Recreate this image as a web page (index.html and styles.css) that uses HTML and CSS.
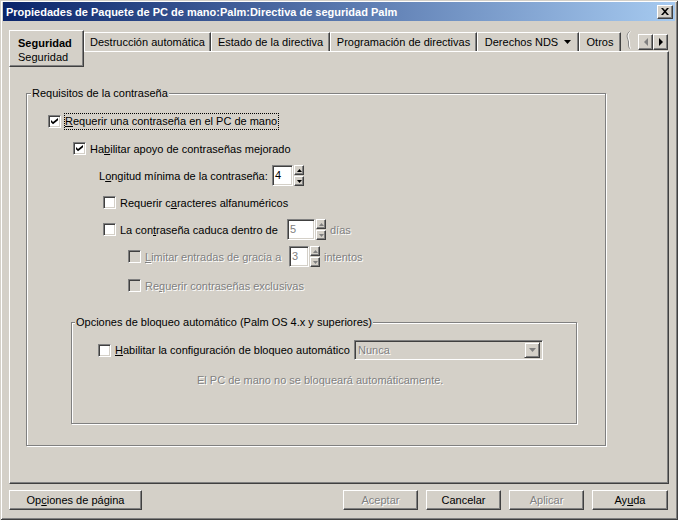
FILE: index.html
```html
<!DOCTYPE html>
<html lang="es">
<head>
<meta charset="utf-8">
<title>Propiedades de Paquete de PC de mano</title>
<link rel="stylesheet" href="styles.css">
</head>
<body>
<div class="window">
  <div class="titlebar">
    <span class="title">Propiedades de Paquete de PC de mano:Palm:Directiva de seguridad Palm</span>
    <span class="close"><svg width="8" height="7" viewBox="0 0 8 7"><path d="M0 0h2l2 2.2L6 0h2L5 3.5 8 7H6L4 4.8 2 7H0l3-3.5z" fill="#000"/></svg></span>
  </div>

  <div class="tabstrip">
    <div class="tab active"><b>Seguridad</b><span>Seguridad</span></div>
    <div class="tab t-destr">Destrucción automática</div>
    <div class="tab t-estado">Estado de la directiva</div>
    <div class="tab t-prog">Programación de directivas</div>
    <div class="tab t-der">Derechos NDS <svg class="drop" width="7" height="4" viewBox="0 0 7 4"><path d="M0 0h7L3.5 4z" fill="#000"/></svg></div>
    <div class="tab t-otros">Otros</div>
    <svg class="wavy" width="6" height="18" viewBox="0 0 6 18"><path d="M4.5 0.5C2 3 1.5 5 3 8.5S2.5 14 4.5 17.5" fill="none" stroke="#808080"/><path d="M5.5 0.5C3 3 2.5 5 4 8.5S3.5 14 5.5 17.5" fill="none" stroke="#fff"/></svg>
    <div class="arrows">
      <span class="arr"><svg width="4" height="8" viewBox="0 0 4 8"><path d="M4 0v8L0 4z" fill="#808080"/></svg></span>
      <span class="arr"><svg width="4" height="8" viewBox="0 0 4 8"><path d="M0 0v8l4-4z" fill="#000"/></svg></span>
    </div>
  </div>

  <div class="panel">
    <div class="group g1">
      <div class="gtitle">Requisitos de la contraseña</div>

      <div class="row r1">
        <span class="cb"><svg width="7" height="7" viewBox="0 0 7 7"><path d="M0 2l2 2 5-4v2.2L2 6.2 0 4.2z" fill="#000"/></svg></span>
        <span class="lbl focus"><u>R</u>equerir una contraseña en el PC de mano</span>
      </div>

      <div class="row r2">
        <span class="cb"><svg width="7" height="7" viewBox="0 0 7 7"><path d="M0 2l2 2 5-4v2.2L2 6.2 0 4.2z" fill="#000"/></svg></span>
        <span class="lbl">Ha<u>b</u>ilitar apoyo de contraseñas mejorado</span>
      </div>

      <div class="row r3">
        <span class="lbl fix-len">L<u>o</u>ngitud mínima de la contraseña:</span>
        <span class="edit w21">4</span>
        <span class="spin">
          <span class="sb"><svg width="5" height="3" viewBox="0 0 5 3"><path d="M0 3h5L2.5 0z" fill="#000"/></svg></span>
          <span class="sb"><svg width="5" height="3" viewBox="0 0 5 3"><path d="M0 0h5L2.5 3z" fill="#000"/></svg></span>
        </span>
      </div>

      <div class="row r4">
        <span class="cb"></span>
        <span class="lbl">Requerir c<u>a</u>racteres alfanuméricos</span>
      </div>

      <div class="row r5">
        <span class="cb"></span>
        <span class="lbl fix-cad">La con<u>t</u>raseña caduca dentro de</span>
        <span class="edit w28 dis-t">5</span>
        <span class="spin">
          <span class="sb"><svg width="5" height="3" viewBox="0 0 5 3"><path d="M0 3h5L2.5 0z" fill="#808080"/></svg></span>
          <span class="sb"><svg width="5" height="3" viewBox="0 0 5 3"><path d="M0 0h5L2.5 3z" fill="#808080"/></svg></span>
        </span>
        <span class="lbl after dis-t">días</span>
      </div>

      <div class="row r6">
        <span class="cb dis"></span>
        <span class="lbl fix-lim dis-t"><u>L</u>imitar entradas de gracia a</span>
        <span class="edit w20 dis-t">3</span>
        <span class="spin">
          <span class="sb"><svg width="5" height="3" viewBox="0 0 5 3"><path d="M0 3h5L2.5 0z" fill="#808080"/></svg></span>
          <span class="sb"><svg width="5" height="3" viewBox="0 0 5 3"><path d="M0 0h5L2.5 3z" fill="#808080"/></svg></span>
        </span>
        <span class="lbl after dis-t">intentos</span>
      </div>

      <div class="row r7">
        <span class="cb dis"></span>
        <span class="lbl dis-t">Re<u>q</u>uerir contraseñas exclusivas</span>
      </div>

      <div class="group g2">
        <div class="gtitle">Opciones de bloqueo automático (Palm OS 4.x y superiores)</div>
        <div class="row r8">
          <span class="cb"></span>
          <span class="lbl fix-hab"><u>H</u>abilitar la configuración de bloqueo automático</span>
          <span class="combo">
            <span class="dis-t">Nunca</span>
            <span class="ddbtn"><svg width="7" height="4" viewBox="0 0 7 4"><path d="M0 0h7L3.5 4z" fill="#808080"/></svg></span>
          </span>
        </div>
        <div class="note dis-t">El PC de mano no se bloqueará automáticamente.</div>
      </div>
    </div>
  </div>

  <div class="buttons">
    <span class="btn b-opc">Op<u>c</u>iones de página</span>
    <span class="spacer"></span>
    <span class="btn dis-t">Aceptar</span>
    <span class="btn">Cancelar</span>
    <span class="btn dis-t">Aplicar</span>
    <span class="btn b-ayuda">Ay<u>u</u>da</span>
  </div>
</div>
</body>
</html>
```

FILE: styles.css
```css
* { box-sizing: border-box; }
html, body { margin: 0; padding: 0; }
body {
  background: #d4d0c8;
  font-family: "Liberation Sans", Arial, sans-serif;
  font-size: 11px;
  color: #000;
}

.window {
  width: 678px;
  height: 520px;
  background: #d4d0c8;
  padding: 2px 3px 3px 3px;
  box-shadow: inset 1px 1px #d4d0c8, inset -1px -1px #404040, inset 2px 2px #fff, inset -2px -2px #808080;
  display: flex;
  flex-direction: column;
}

/* Title bar */
.titlebar {
  height: 19px;
  flex: none;
  background: linear-gradient(90deg, #0a246a 0%, #a6caf0 100%);
  display: flex;
  align-items: center;
  justify-content: space-between;
  padding: 0 2px 0 3px;
}
.title {
  color: #fff;
  font-weight: bold;
  font-size: 11px;
  white-space: nowrap;
}
.close {
  width: 16px;
  height: 14px;
  background: #d4d0c8;
  border: 1px solid;
  border-color: #fff #404040 #404040 #fff;
  box-shadow: inset -1px -1px #808080;
  display: flex;
  align-items: center;
  justify-content: center;
}

/* Tabs */
.tabstrip {
  display: flex;
  align-items: flex-start;
  height: 21px;
  flex: none;
  margin: 9px 6px 0 6px;
}
.tab {
  height: 19px;
  margin-top: 2px;
  border-top: 1px solid #fff;
  border-left: 1px solid #fff;
  border-right: 1px solid #404040;
  box-shadow: inset -1px 0 #808080;
  display: flex;
  align-items: center;
  justify-content: center;
  white-space: nowrap;
  flex: none;
}
.tab.active {
  width: 75px;
  height: 37px;
  margin-top: 0;
  position: relative;
  z-index: 1;
  background: #d4d0c8;
  flex-direction: column;
  align-items: flex-start;
  justify-content: flex-start;
  padding: 5px 0 0 8px;
  line-height: 14px;
  border-bottom: 1px solid #404040;
  box-shadow: inset -1px -1px #808080;
}
.t-destr { width: 127px; }
.t-estado { width: 119px; }
.t-prog { width: 147px; }
.t-der { width: 102px; }
.t-otros { width: 42px; }
.drop { margin-left: 6px; }
.wavy { margin: 1px 0 0 4px; flex: none; }
.arrows {
  display: flex;
  margin: 4px 1px 0 auto;
}
.arr {
  width: 15px;
  height: 16px;
  background: #d4d0c8;
  border: 1px solid;
  border-color: #fff #404040 #404040 #fff;
  box-shadow: inset -1px -1px #808080;
  display: flex;
  align-items: center;
  justify-content: center;
}

/* Panel */
.panel {
  height: 433px;
  flex: none;
  margin: 0 6px;
  border: 1px solid;
  border-color: #fff #404040 #404040 #fff;
  box-shadow: inset -1px -1px #808080;
  padding: 41px 0 0 16px;
}

.group {
  border: 1px solid #808080;
  box-shadow: inset 1px 1px #fff, 1px 1px #fff;
}
.g1 { width: 580px; height: 353px; }
.g2 { width: 506px; height: 102px; margin: 28px 0 0 44px; }

.gtitle {
  width: max-content;
  height: 13px;
  line-height: 13px;
  margin: -7px 0 0 4px;
  padding: 0 1px;
  background: #d4d0c8;
}
.g2 .gtitle { margin-left: 3px; }

.row {
  display: flex;
  align-items: center;
  white-space: nowrap;
}
.r1 { height: 17px; margin: 13px 0 0 21px; }
.r2 { height: 17px; margin: 10px 0 0 46px; }
.r3 { height: 21px; margin: 8px 0 0 72px; }
.r4 { height: 17px; margin: 8px 0 0 76px; }
.r5 { height: 21px; margin: 8px 0 0 76px; }
.r6 { height: 21px; margin: 6px 0 0 101px; }
.r7 { height: 17px; margin: 10px 0 0 101px; }
.r8 { height: 20px; margin: 11px 0 0 26px; }

.fix-len { width: 173px; }
.fix-cad { width: 167px; }
.fix-lim { width: 144px; }
.fix-hab { width: 239px; }
.after { margin-left: 4px; }

.cb {
  width: 13px;
  height: 13px;
  flex: none;
  background: #fff;
  border: 1px solid;
  border-color: #808080 #fff #fff #808080;
  box-shadow: inset 1px 1px #404040, inset -1px -1px #d4d0c8;
  display: flex;
  align-items: center;
  justify-content: center;
  margin-right: 4px;
}
.cb.dis { background: #d4d0c8; }

.focus {
  border: 1px dotted #000;
  height: 17px;
  line-height: 15px;
  padding: 0 1px 0 0;
  margin-left: -1px;
}

.dis-t {
  color: #808080;
  text-shadow: 1px 1px #fff;
}

.edit {
  height: 21px;
  flex: none;
  background: #fff;
  border: 1px solid;
  border-color: #808080 #fff #fff #808080;
  box-shadow: inset 1px 1px #404040, inset -1px -1px #d4d0c8;
  padding: 0 2px;
  line-height: 19px;
}
.w21 { width: 21px; }
.w28 { width: 28px; }
.w20 { width: 20px; }

.spin {
  display: flex;
  flex-direction: column;
  gap: 1px;
  margin-left: 1px;
  flex: none;
}
.sb {
  width: 10px;
  height: 10px;
  background: #d4d0c8;
  border: 1px solid;
  border-color: #fff #404040 #404040 #fff;
  box-shadow: inset -1px -1px #808080;
  display: flex;
  align-items: center;
  justify-content: center;
}

.combo {
  width: 189px;
  height: 20px;
  flex: none;
  background: #d4d0c8;
  border: 1px solid;
  border-color: #808080 #fff #fff #808080;
  box-shadow: inset 1px 1px #404040, inset -1px -1px #d4d0c8;
  display: flex;
  align-items: center;
  justify-content: space-between;
  padding: 0 2px 0 3px;
}
.ddbtn {
  width: 16px;
  height: 16px;
  background: #d4d0c8;
  border: 1px solid;
  border-color: #d4d0c8 #404040 #404040 #d4d0c8;
  box-shadow: inset 1px 1px #fff, inset -1px -1px #808080;
  display: flex;
  align-items: center;
  justify-content: center;
}

.note {
  height: 13px;
  line-height: 13px;
  margin: 14px 0 0 125px;
}

/* Bottom buttons */
.buttons {
  display: flex;
  gap: 8px;
  height: 20px;
  flex: none;
  margin: 6px 7px 0 6px;
}
.spacer { flex: 1; }
.btn {
  width: 75px;
  height: 20px;
  background: #d4d0c8;
  border: 1px solid;
  border-color: #fff #404040 #404040 #fff;
  box-shadow: inset -1px -1px #808080;
  display: flex;
  align-items: center;
  justify-content: center;
  white-space: nowrap;
}
.b-opc { width: 133px; }
.b-ayuda { width: 76px; }
```
